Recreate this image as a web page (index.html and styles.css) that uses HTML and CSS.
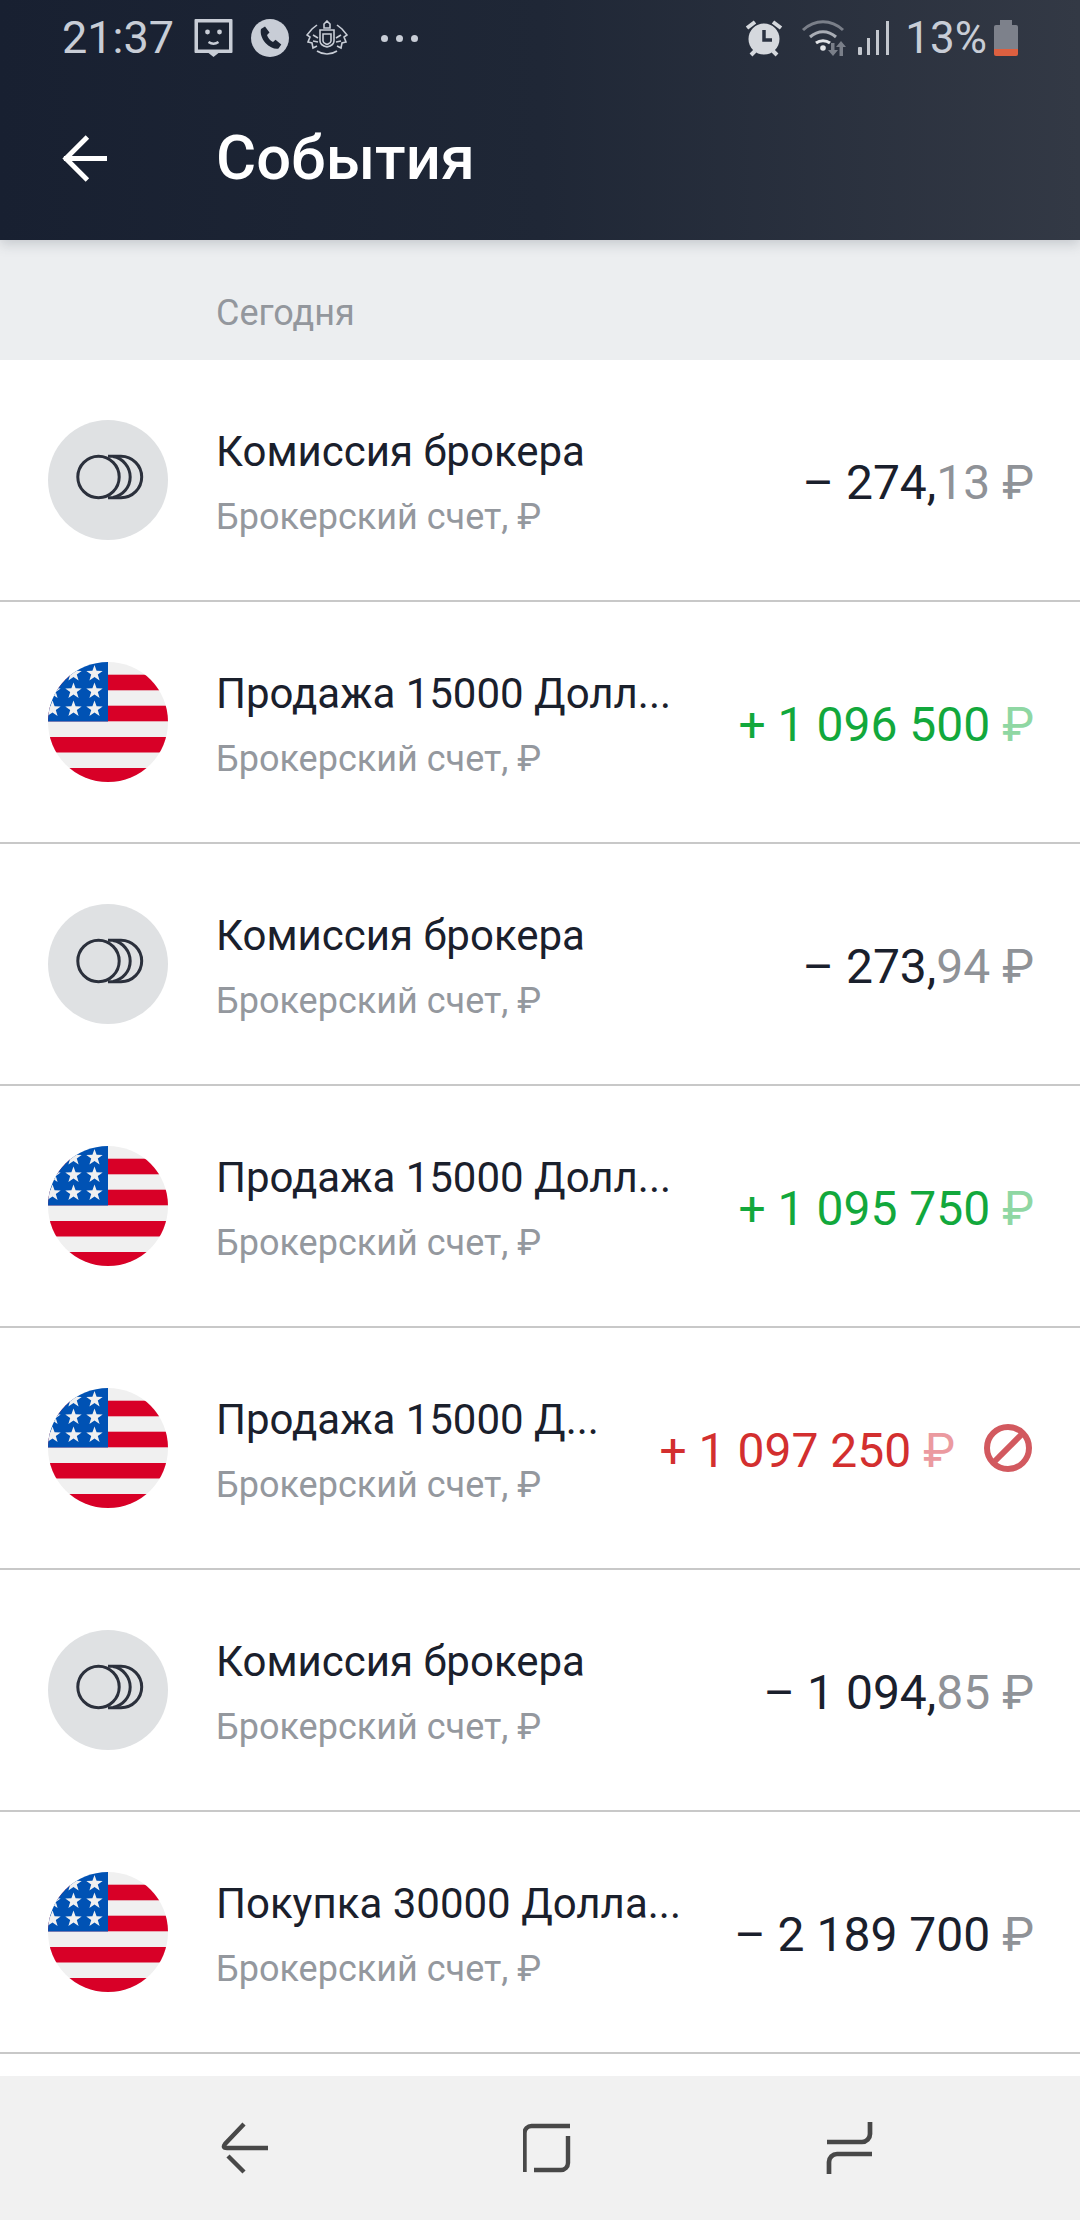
FILE: index.html
```html
<!DOCTYPE html>
<html lang="ru">
<head>
<meta charset="utf-8">
<title>События</title>
<link rel="stylesheet" href="styles.css">
</head>
<body>
<svg class="defs" width="0" height="0" aria-hidden="true">
  <defs>
    <polygon id="star" points="0,-8.5 2.1,-2.7 8.2,-2.6 3.3,1.1 5.1,7 0,3.5 -5.1,7 -3.3,1.1 -8.2,-2.6 -2.1,-2.7"/>
    <clipPath id="disc"><circle cx="60" cy="60" r="60"/></clipPath>
    <symbol id="flag" viewBox="0 0 120 120">
      <g clip-path="url(#disc)">
        <rect width="120" height="120" fill="#f0f0f0"/>
        <g fill="#d80027">
          <rect y="12.7" width="120" height="15.6"/>
          <rect y="43.7" width="120" height="15.6"/>
          <rect y="75" width="120" height="15.5"/>
          <rect y="106" width="120" height="14"/>
        </g>
        <rect width="60" height="59.5" fill="#0052b4"/>
        <g fill="#f0f0f0">
          <use href="#star" x="46.5" y="11.5"/>
          <use href="#star" x="25.5" y="11.5"/>
          <use href="#star" x="46.5" y="29"/>
          <use href="#star" x="25.5" y="29"/>
          <use href="#star" x="4.5" y="29"/>
          <use href="#star" x="46.5" y="47"/>
          <use href="#star" x="25.5" y="47"/>
          <use href="#star" x="4.5" y="47"/>
        </g>
      </g>
    </symbol>
    <symbol id="coins" viewBox="0 0 120 120">
      <circle cx="60" cy="60" r="60" fill="#dfe1e3"/>
      <g fill="none" stroke="#2b303c" stroke-width="3">
        <path d="M60 36.300h13a20.700 20.700 0 0 1 0 41.400H60"/>
        <path d="M65 36.600A20.700 20.700 0 0 1 65 77.400"/>
        <circle cx="50.500" cy="57" r="20.700"/>
      </g>
    </symbol>
  </defs>
</svg>

<header class="appbar">
  <div class="status">
    <div class="status-left">
      <span class="clock">21:37</span>
      <svg class="si si-msg" viewBox="0 0 38 38"><path fill="#c8cdd6" d="M1 0h36a1 1 0 0 1 1 1v32a1 1 0 0 1-1 1H24l-5 4-5-4H1a1 1 0 0 1-1-1V1a1 1 0 0 1 1-1z"/><rect x="3.500" y="3.500" width="31" height="27" fill="#1a2231"/><circle cx="13" cy="13" r="2.400" fill="#c8cdd6"/><circle cx="25" cy="13" r="2.400" fill="#c8cdd6"/><path d="M14 23c3 2 7 2 10 0" fill="none" stroke="#c8cdd6" stroke-width="2.400"/></svg>
      <svg class="si si-call" viewBox="0 0 38 40"><circle cx="19" cy="20" r="19" fill="#c8cdd6"/><path fill="#1c2433" d="M10 11l4-2.500 4.500 6-2.500 2.500c.8 2.800 3 5.500 6 7l2.500-2.200 5.800 4.800-2.800 3.800c-3 1-9-1-13-5.500S9 15 10 11z"/></svg>
      <svg class="si si-crest" viewBox="0 0 42 36" fill="none" stroke="#c8cdd6" stroke-width="1.600"><path d="M21 1l3 3v4h-6V4z"/><path d="M14 10h14v11c0 3-3 5-7 6-4-1-7-3-7-6z"/><path d="M17 14h8v7c0 2-2 2.500-4 3.500-2-1-4-1.500-4-3.500z"/><path d="M11 5L6 9 1 15l3 2-2 5 4 1 1 5 4-2M31 5l5 4 5 6-3 2 2 5-4 1-1 5-4-2"/><path d="M7 15l5 3M7 21l5 1M35 15l-5 3M35 21l-5 1"/><path d="M11 31c6 4 14 4 20 0"/></svg>
      <span class="dots"><i></i><i></i><i></i></span>
    </div>
    <div class="status-right">
      <svg class="si si-alarm" viewBox="0 0 40 38"><path stroke="#d5d8dd" stroke-width="4" d="M3 9l8-6M37 9l-8-6M7 36l4-4M33 36l-4-4"/><circle cx="20" cy="20" r="15.500" fill="#d5d8dd"/><path d="M20 11v10h8" fill="none" stroke="#2b3241" stroke-width="3.500"/></svg>
      <svg class="si si-wifi" viewBox="0 0 50 38" fill="none"><path stroke="#7a7f89" stroke-width="3" d="M2 11c12-11 28-11 40 0"/><path stroke="#a9adb5" stroke-width="3" d="M9 18c8-7 18-7 26 0"/><path stroke="#e3e5e8" stroke-width="3" d="M15 24c4-3 10-3 14 0"/><circle cx="22" cy="29" r="2.800" fill="#e3e5e8"/><path fill="#7a7f89" d="M30 24h3.500v7H37l-5 6-5-6h3zM42 37h-3.500v-9H35l5-6 5 6h-3z"/></svg>
      <svg class="si si-signal" viewBox="0 0 32 34"><g fill="#c3c7ce"><rect x="0" y="26" width="4" height="8" rx="1"/><rect x="9" y="17" width="3" height="17"/><rect x="18" y="9" width="3" height="25"/><rect x="28" y="0" width="3" height="34"/></g></svg>
      <span class="pct">13%</span>
      <span class="battery"><i class="cap"></i><i class="cell"></i></span>
    </div>
  </div>
  <div class="toolbar">
    <svg class="back" viewBox="0 0 48 48" fill="none" stroke="#fff" stroke-width="5"><path d="M48 24H4M28 2L6 24l22 22"/></svg>
    <h1 class="title">События</h1>
  </div>
</header>

<section class="day">Сегодня</section>

<main class="list">
  <article class="row">
    <svg class="avatar"><use href="#coins"/></svg>
    <div class="info"><div class="name">Комиссия брокера</div><div class="account">Брокерский счет, ₽</div></div>
    <div class="sum">– 274,<span class="sum-dim">13 ₽</span></div>
  </article>
  <article class="row">
    <svg class="avatar"><use href="#flag"/></svg>
    <div class="info"><div class="name">Продажа 15000 Долл...</div><div class="account">Брокерский счет, ₽</div></div>
    <div class="sum sum-plus">+ 1 096 500 <span class="cur">₽</span></div>
  </article>
  <article class="row">
    <svg class="avatar"><use href="#coins"/></svg>
    <div class="info"><div class="name">Комиссия брокера</div><div class="account">Брокерский счет, ₽</div></div>
    <div class="sum">– 273,<span class="sum-dim">94 ₽</span></div>
  </article>
  <article class="row">
    <svg class="avatar"><use href="#flag"/></svg>
    <div class="info"><div class="name">Продажа 15000 Долл...</div><div class="account">Брокерский счет, ₽</div></div>
    <div class="sum sum-plus">+ 1 095 750 <span class="cur">₽</span></div>
  </article>
  <article class="row">
    <svg class="avatar"><use href="#flag"/></svg>
    <div class="info"><div class="name">Продажа 15000 Д...</div><div class="account">Брокерский счет, ₽</div></div>
    <div class="sum sum-fail">+ 1 097 250 <span class="cur">₽</span></div>
    <svg class="ban" viewBox="0 0 48 48" fill="none" stroke="#d2595f" stroke-width="6"><circle cx="24" cy="24" r="21"/><path d="M9 39L39 9"/></svg>
  </article>
  <article class="row">
    <svg class="avatar"><use href="#coins"/></svg>
    <div class="info"><div class="name">Комиссия брокера</div><div class="account">Брокерский счет, ₽</div></div>
    <div class="sum">– 1 094,<span class="sum-dim">85 ₽</span></div>
  </article>
  <article class="row">
    <svg class="avatar"><use href="#flag"/></svg>
    <div class="info"><div class="name">Покупка 30000 Долла...</div><div class="account">Брокерский счет, ₽</div></div>
    <div class="sum">– 2 189 700 <span class="sum-dim">₽</span></div>
  </article>
</main>

<nav class="navbar">
  <svg class="nav-ic" viewBox="0 0 48 54" fill="none" stroke="#484848" stroke-width="4.400"><path d="M23 2L4 22q-3 4 2 4H47"/><path d="M7 34l16 16"/></svg>
  <svg class="nav-ic" viewBox="0 0 48 54" fill="none" stroke="#484848" stroke-width="4.400"><path d="M1.500 50V11a7 7 0 0 1 7-7H47"/><path d="M45 14V41a7 7 0 0 1-7 7H11"/></svg>
  <svg class="nav-ic" viewBox="0 0 48 54" fill="none" stroke="#484848" stroke-width="4.700"><path d="M45 0V12a8 8 0 0 1-8 8H2"/><path d="M47 32H12a8 8 0 0 0-8 8V52"/></svg>
</nav>
</body>
</html>
```

FILE: styles.css
```css
* { box-sizing: border-box; }
html, body { margin: 0; padding: 0; }
body {
  width: 1080px;
  height: 2220px;
  overflow: hidden;
  display: flex;
  flex-direction: column;
  background: #fff;
  font-family: Roboto, "Liberation Sans", sans-serif;
}
.defs { display: block; height: 0; }

.appbar {
  height: 240px;
  flex: none;
  background: linear-gradient(90deg, #182031 0%, #1f2736 50%, #333945 100%);
  position: relative;
  z-index: 1;
  box-shadow: 0 4px 12px rgba(60, 70, 80, .22);
}
.status {
  height: 80px;
  padding: 17px 0 0 62px;
  display: flex;
  justify-content: space-between;
  align-items: flex-start;
}
.status-left, .status-right { display: flex; align-items: center; height: 42px; }
.status-right { padding-right: 62px; }
.clock, .pct { font-size: 45px; line-height: 42px; color: #c8cdd6; letter-spacing: 0; }
.pct { font-size: 44px; }
.si { display: block; flex: none; }
.si-msg { width: 39px; height: 38px; margin-left: 20px; }
.si-call { width: 40px; height: 40px; margin-left: 17px; }
.si-crest { width: 42px; height: 36px; margin-left: 16px; }
.dots { display: flex; gap: 8px; margin-left: 33px; }
.dots i { width: 7px; height: 7px; border-radius: 50%; background: #c8cdd6; }
.si-alarm { width: 40px; height: 38px; }
.si-wifi { width: 50px; height: 38px; margin-left: 17px; }
.si-signal { width: 32px; height: 34px; margin-left: 7px; }
.pct { margin-left: 15px; }
.battery { display: flex; flex-direction: column; align-items: center; margin-left: 7px; width: 24px; height: 36px; }
.battery .cap { width: 12px; height: 5px; background: #7d818b; }
.battery .cell {
  flex: 1;
  width: 24px;
  border-radius: 2px;
  background: linear-gradient(#7d818b 0 24px, #dd6040 24px);
}

.toolbar { height: 160px; display: flex; align-items: center; padding: 0 0 0 60px; margin-top: -2px; }
.back { width: 47px; height: 47px; flex: none; }
.title { margin: 0 0 0 109px; font-size: 61.500px; line-height: 64px; font-weight: 500; color: #fff; }

.day {
  height: 120px;
  flex: none;
  padding: 51px 0 0 216px;
  background: #eceef0;
  font-size: 36px;
  line-height: 44px;
  color: #93979d;
}

.list { flex: 1; min-height: 0; }
.row {
  height: 242px;
  border-bottom: 2px solid #c8c8c8;
  display: flex;
  align-items: center;
  padding: 0 48px;
}
.avatar { width: 120px; height: 120px; flex: none; }
.info { flex: 1; min-width: 0; margin: 0 40px 0 48px; padding-top: 5px; }
.name {
  font-size: 42px;
  line-height: 48px;
  color: #1a202c;
  white-space: nowrap;
}
.account { margin-top: 21px; font-size: 36px; line-height: 40px; color: #94989e; white-space: nowrap; }
.sum { flex: none; font-size: 48px; line-height: 52px; padding-top: 6px; margin-right: -2px; color: #1a202c; white-space: nowrap; }
.sum-dim { color: #8f9297; }
.sum-plus { color: #12a83c; }
.sum-plus .cur { color: #8fd7a3; }
.sum-fail { color: #d32f2f; }
.sum-fail .cur { color: #eb9aa0; }
.ban { width: 48px; height: 48px; flex: none; margin-left: 31px; }

.navbar {
  height: 144px;
  flex: none;
  background: #f1f1f1;
  display: grid;
  grid-template-columns: repeat(3, 48px);
  justify-content: start;
  column-gap: 254px;
  padding: 46px 0 0 221px;
}
.nav-ic { width: 48px; height: 54px; display: block; }
```
